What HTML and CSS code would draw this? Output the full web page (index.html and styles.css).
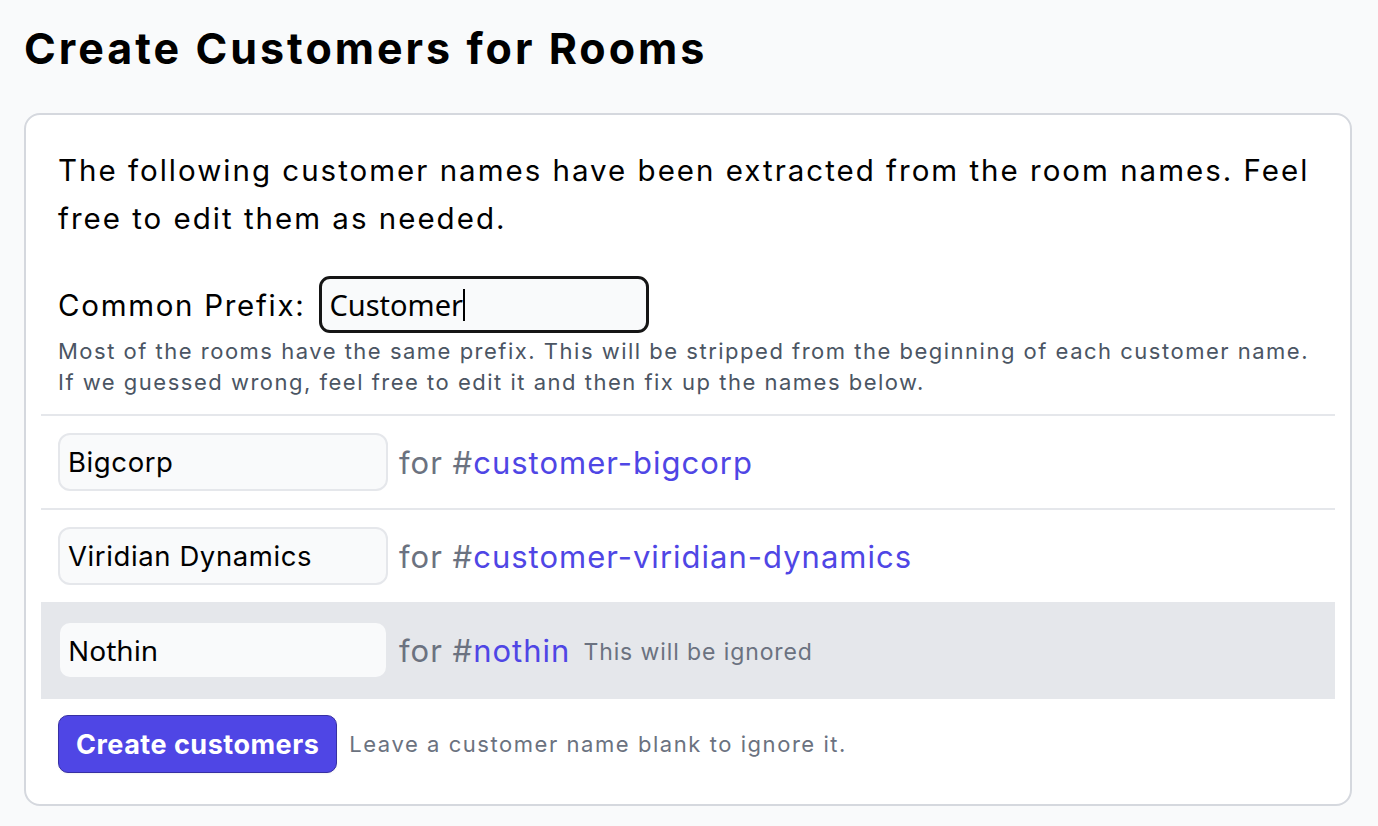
FILE: index.html
```html
<!DOCTYPE html>
<html lang="en">
<head>
<meta charset="utf-8">
<title>Create Customers for Rooms</title>
<link rel="stylesheet" href="styles.css">
</head>
<body>
<main class="page">
  <h1 class="title">Create Customers for Rooms</h1>
  <section class="card">
    <div class="intro">
      <p class="lead">The following customer names have been extracted from the room names. Feel free to edit them as needed.</p>
      <div class="prefix">
        <label class="prefix-label" for="prefix">Common Prefix:</label>
        <div class="prefix-input"><span class="prefix-value">Customer</span><span class="caret"></span></div>
      </div>
      <p class="help">Most of the rooms have the same prefix. This will be stripped from the beginning of each customer name.<br>If we guessed wrong, feel free to edit it and then fix up the names below.</p>
    </div>
    <div class="row">
      <div class="name-input">Bigcorp</div>
      <span class="for">for #<span class="room">customer-bigcorp</span></span>
    </div>
    <div class="row">
      <div class="name-input">Viridian Dynamics</div>
      <span class="for">for #<span class="room">customer-viridian-dynamics</span></span>
    </div>
    <div class="row row-ignored">
      <div class="name-input name-input-alt">Nothin</div>
      <span class="for">for #<span class="room">nothin</span></span>
      <span class="ignored">This will be ignored</span>
    </div>
    <div class="actions">
      <button class="btn" type="button">Create customers</button>
      <span class="hint">Leave a customer name blank to ignore it.</span>
    </div>
  </section>
</main>
</body>
</html>
```

FILE: styles.css
```css
* { box-sizing: border-box; }
html, body { margin: 0; padding: 0; }
body {
  background: #f9fafb;
  font-family: Inter, "Noto Sans", sans-serif;
  color: #000;
}
.page {
  padding: 0 26px 20px 24px;
}
.title {
  margin: 0;
  padding-top: 22px;
  font-size: 43px;
  line-height: 52px;
  font-weight: 700;
  height: 113px;
  letter-spacing: 3px;
}
.card {
  background: #fff;
  border: 2px solid #d5d8de;
  border-radius: 16px;
  padding: 0 15px;
}
.intro {
  padding: 31px 8px 16px 17px;
  border-bottom: 2px solid #e5e7eb;
}
.lead {
  margin: 0;
  font-size: 29.5px;
  line-height: 48px;
  letter-spacing: 2px;
}
.prefix {
  margin-top: 34px;
  display: flex;
  align-items: center;
  gap: 14px;
}
.prefix-label {
  font-size: 29.5px;
  line-height: 40px;
  letter-spacing: 1.7px;
}
.prefix-input {
  width: 330px;
  height: 57px;
  border: 3px solid #151515;
  border-radius: 11px;
  background: #f9fafb;
  display: flex;
  align-items: center;
  padding: 0 7px;
  font-family: "Noto Sans", sans-serif;
  font-size: 29px;
}
.caret {
  width: 2px;
  height: 32px;
  background: #000;
}
.help {
  margin: 3px 0 0;
  font-size: 22px;
  line-height: 31px;
  letter-spacing: 1.5px;
  color: #4b5563;
}
.row {
  display: flex;
  align-items: center;
  padding: 17px 17px;
  border-bottom: 2px solid #e5e7eb;
}
.row-ignored {
  background: #e5e7eb;
  border-bottom: 0;
  padding: 17px 17px 20px;
}
.name-input {
  width: 330px;
  height: 58px;
  border: 2px solid #e5e7eb;
  border-radius: 12px;
  background: #f9fafb;
  display: flex;
  align-items: center;
  padding: 0 8px;
  font-size: 27.5px;
  letter-spacing: 0.6px;
  flex-shrink: 0;
}
.name-input-alt {
  font-family: "Noto Sans", sans-serif;
  font-size: 28px;
  letter-spacing: 0;
}
.for {
  margin-left: 11px;
  font-size: 31px;
  letter-spacing: 1px;
  color: #6b7280;
}
.room { color: #4f46e5; }
.ignored {
  margin-left: 13px;
  font-size: 23px;
  letter-spacing: 0.9px;
  color: #6b7280;
  padding-top: 4px;
}
.actions {
  display: flex;
  align-items: center;
  padding: 16px 17px 31px;
}
.btn {
  height: 58px;
  padding: 0 17px;
  background: #4f46e5;
  border: 1px solid #3730a3;
  border-radius: 10px;
  color: #fff;
  font-family: Inter, "Noto Sans", sans-serif;
  font-weight: 700;
  font-size: 27px;
  letter-spacing: 0.5px;
  box-shadow: 0 1px 2px rgba(0,0,0,0.05);
}
.hint {
  margin-left: 12px;
  font-size: 22px;
  letter-spacing: 1.55px;
  color: #6b7280;
}
```
